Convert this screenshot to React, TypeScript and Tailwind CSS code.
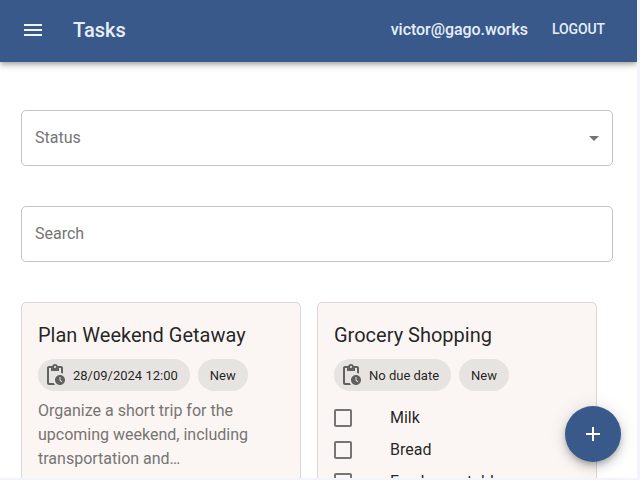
import React from "react";
import { MdAdd, MdArrowDropDown, MdCheckBoxOutlineBlank, MdMenu } from "react-icons/md";

function PendingIcon({ className }: { className: string }) {
  return (
    <svg viewBox="0 0 24 24" fill="currentColor" className={className} aria-hidden="true">
      <path d="M17 12c-2.76 0-5 2.24-5 5s2.24 5 5 5 5-2.24 5-5-2.24-5-5-5zm1.65 7.35L16.5 17.2V14h1v2.79l1.85 1.85-.7.71zM18 3h-3.18C14.4 1.84 13.3 1 12 1s-2.4.84-2.82 2H6c-1.1 0-2 .9-2 2v15c0 1.1.9 2 2 2h6.11c-.59-.57-1.07-1.25-1.42-2H6V5h2v3h8V5h2v5.08c.71.1 1.38.31 2 .6V5c0-1.1-.9-2-2-2zm-6 2c-.55 0-1-.45-1-1s.45-1 1-1 1 .45 1 1-.45 1-1 1z" />
    </svg>
  );
}

function Chip({ label, icon }: { label: string; icon?: boolean }) {
  return (
    <span className="flex h-8 items-center rounded-full bg-[#e7e3e1] text-[13px] leading-8 text-black/87">
      {icon && <PendingIcon className="-mr-1.5 ml-[5px] size-6 text-[#616161]" />}
      <span className="whitespace-nowrap px-3 pt-0.5">{label}</span>
    </span>
  );
}

function TaskCard({ title, due, children }: { title: string; due: string; children: React.ReactNode }) {
  return (
    <article className="h-[260px] w-[280px] shrink-0 rounded-[5px] border border-[#dad7d5] bg-[#fbf6f4] p-4">
      <h2 className="h-8 text-[20px] leading-8 text-black/87">{title}</h2>
      <div className="mt-2 flex gap-2">
        <Chip label={due} icon />
        <Chip label="New" />
      </div>
      {children}
    </article>
  );
}

function Field({ label, select }: { label: string; select?: boolean }) {
  return (
    <div className="flex h-14 w-[592px] items-center justify-between rounded-[5px] border border-[#c4c4c4] pl-[13px] pr-[6px] text-[16px] text-[#757575]">
      <span>{label}</span>
      {select && <MdArrowDropDown className="size-6 text-black/54" />}
    </div>
  );
}

export default function App() {
  return (
    <div className="h-[480px] w-[640px] overflow-hidden bg-[#f3f4fb] font-['Roboto',sans-serif]">
      <div className="relative h-[478px] w-[637px] overflow-hidden bg-white">
        <header className="flex h-[62px] items-center bg-[#385989] pb-0.5 pl-[21px] pr-8 text-[#e6effb] shadow-[0_2px_4px_-1px_rgba(0,0,0,0.2),0_4px_5px_0_rgba(0,0,0,0.14),0_1px_10px_0_rgba(0,0,0,0.12)]">
          <MdMenu className="size-6 text-[#f0f6ff]" />
          <h1 className="ml-7 grow text-[20px] font-medium">Tasks</h1>
          <span className="text-[16px] font-medium tracking-[-0.05px]">victor@gago.works</span>
          <button className="ml-6 pb-0.5 text-[14px] font-medium tracking-[-0.1px]">LOGOUT</button>
        </header>
        <main className="flex flex-col gap-10 pl-[21px] pt-12">
          <Field label="Status" select />
          <Field label="Search" />
          <div className="flex gap-4">
            <TaskCard title="Plan Weekend Getaway" due="28/09/2024 12:00">
              <p className="mt-2 text-[16px] leading-6 text-[#777472]">
                Organize a short trip for the upcoming weekend, including transportation and…
              </p>
            </TaskCard>
            <TaskCard title="Grocery Shopping" due="No due date">
              <ul className="mt-[11px]">
                {["Milk", "Bread", "Fresh vegetables"].map((item) => (
                  <li key={item} className="flex h-8 items-center text-[16px] text-black/87">
                    <MdCheckBoxOutlineBlank className="-ml-[3px] mr-[35px] size-6 text-[#757575]" />
                    {item}
                  </li>
                ))}
              </ul>
            </TaskCard>
          </div>
        </main>
        <button
          aria-label="Add task"
          className="absolute left-[565px] top-[406px] flex size-14 items-center justify-center rounded-full bg-[#385989] text-white shadow-[0_3px_5px_-1px_rgba(0,0,0,0.2),0_6px_10px_0_rgba(0,0,0,0.14),0_1px_18px_0_rgba(0,0,0,0.12)]"
        >
          <MdAdd className="size-6" />
        </button>
      </div>
    </div>
  );
}
